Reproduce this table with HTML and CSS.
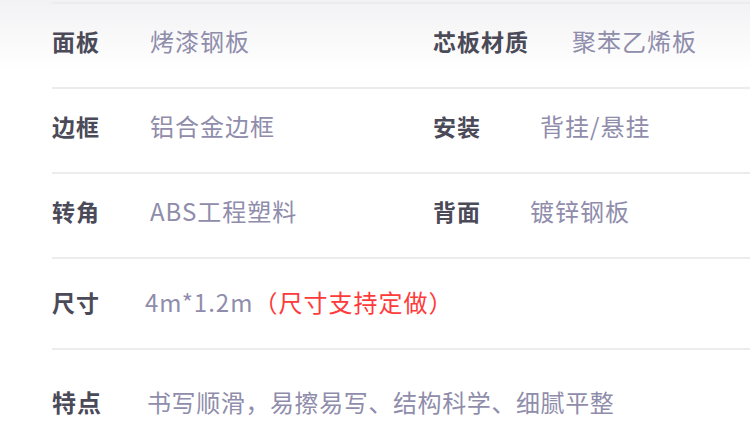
FILE: index.html
```html
<!DOCTYPE html>
<html lang="zh-CN">

<head>
    <meta charset="UTF-8">
    <meta name="viewport" content="width=device-width, initial-scale=1.0">
    <title>产品参数</title>
    <link rel="stylesheet" href="styles.css">
</head>

<body>
    <div class="params">
        <div class="param-row first">
            <div class="param">
                <span class="label">面板</span>
                <span class="value">烤漆钢板</span>
            </div>
            <div class="param">
                <span class="label">芯板材质</span>
                <span class="value narrow">聚苯乙烯板</span>
            </div>
        </div>
        <div class="param-row">
            <div class="param">
                <span class="label">边框</span>
                <span class="value">铝合金边框</span>
            </div>
            <div class="param">
                <span class="label">安装</span>
                <span class="value wide">背挂/悬挂</span>
            </div>
        </div>
        <div class="param-row">
            <div class="param">
                <span class="label">转角</span>
                <span class="value">ABS工程塑料</span>
            </div>
            <div class="param">
                <span class="label">背面</span>
                <span class="value mid">镀锌钢板</span>
            </div>
        </div>
        <div class="param-row tall">
            <div class="param">
                <span class="label">尺寸</span>
                <span class="value">4m*1.2m<em class="note">（尺寸支持定做）</em></span>
            </div>
        </div>
        <div class="param-row last">
            <div class="param">
                <span class="label">特点</span>
                <span class="value">书写顺滑，易擦易写、结构科学、细腻平整</span>
            </div>
        </div>
    </div>
</body>

</html>
```

FILE: styles.css
```css
body {
    margin: 0;
    background-color: #fff;
    font-family: "Noto Sans CJK SC", "Noto Sans", sans-serif;
}

.params {
    padding: 2px 0 0 52px;
    background: linear-gradient(to bottom, #f2f2f4 0, #fff 70px);
}

.param-row {
    display: flex;
    height: 83px;
    border-top: 2px solid #ececee;
    box-sizing: content-box;
    align-items: flex-start;
}

.param-row .param {
    display: flex;
    align-items: center;
    flex: none;
    padding-top: 22px;
    line-height: 30px;
    letter-spacing: 1px;
    white-space: nowrap;
}

.param-row .param:first-child {
    width: 381px;
}

.param-row.tall {
    height: 89px;
}

.param-row.tall .param {
    padding-top: 28px;
    width: auto;
}

.param-row.last {
    height: 92px;
}

.param-row.last .param {
    padding-top: 37px;
    width: auto;
}

.label {
    font-size: 23px;
    font-weight: bold;
    color: #4b4a58;
    margin-right: 50px;
}

.value {
    font-size: 24px;
    color: #8f8dab;
}

.param:last-child .label {
    margin-right: 45px;
}

.last .label {
    font-size: 24px;
    margin-right: 46px;
}

.last .value {
    letter-spacing: 0.6px;
}

.value.wide {
    margin-left: 14px;
}

.value.mid {
    margin-left: 4px;
}

.value.narrow {
    margin-left: -2px;
}

.note {
    font-style: normal;
    color: #ff3a3a;
}
```
